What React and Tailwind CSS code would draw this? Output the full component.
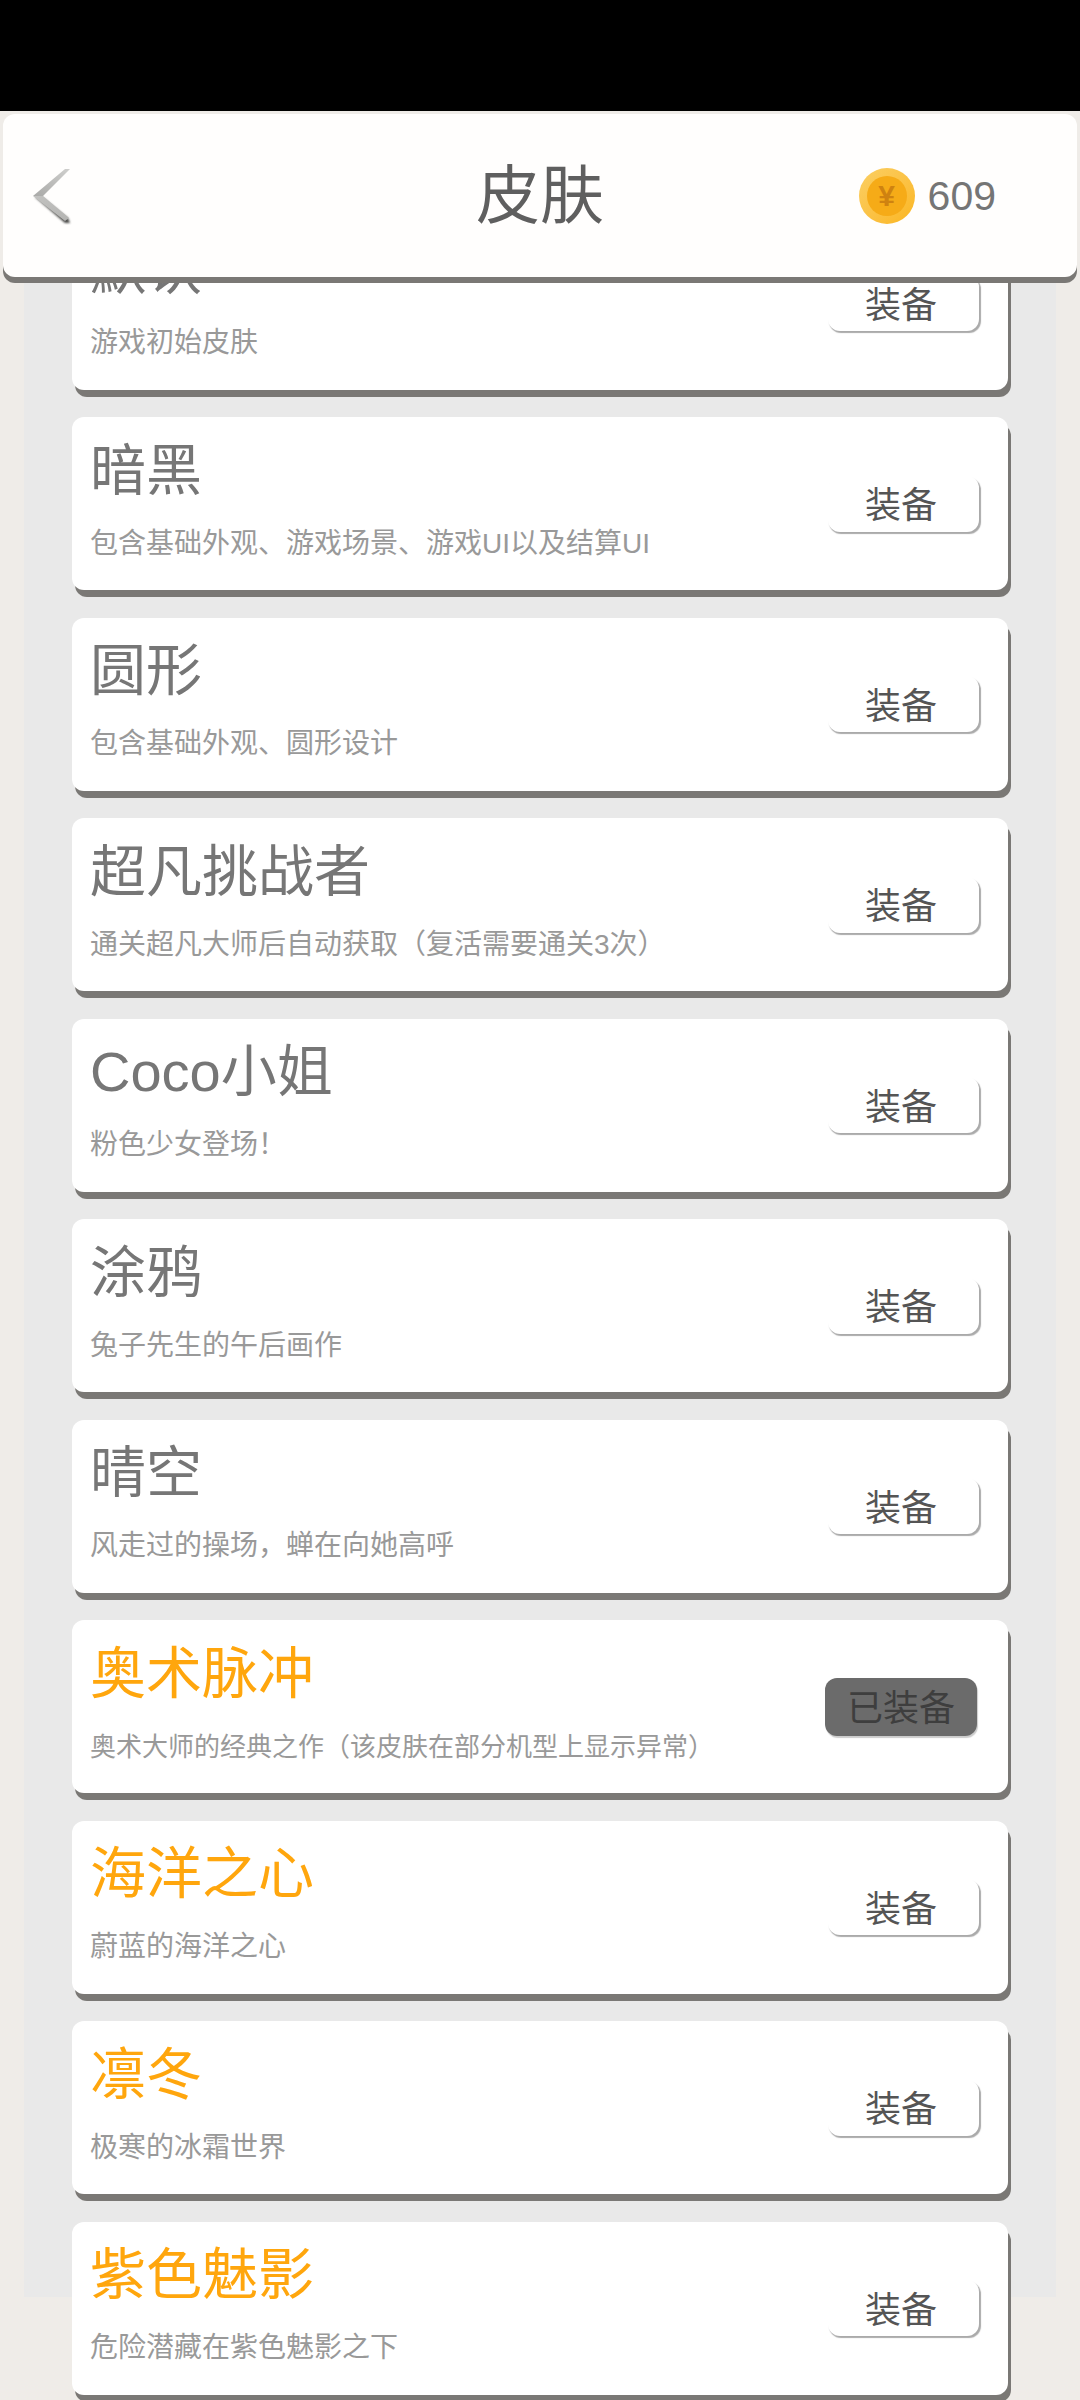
const font = { fontFamily: '"Liberation Sans", "Noto Sans CJK SC", sans-serif' };

const skins = [
  { name: "默认", desc: "游戏初始皮肤" },
  { name: "暗黑", desc: "包含基础外观、游戏场景、游戏UI以及结算UI" },
  { name: "圆形", desc: "包含基础外观、圆形设计" },
  { name: "超凡挑战者", desc: "通关超凡大师后自动获取（复活需要通关3次）" },
  { name: "Coco小姐", desc: "粉色少女登场！" },
  { name: "涂鸦", desc: "兔子先生的午后画作" },
  { name: "晴空", desc: "风走过的操场，蝉在向她高呼" },
  { name: "奥术脉冲", desc: "奥术大师的经典之作（该皮肤在部分机型上显示异常）", special: true, equipped: true, smallDesc: true },
  { name: "海洋之心", desc: "蔚蓝的海洋之心", special: true },
  { name: "凛冬", desc: "极寒的冰霜世界", special: true },
  { name: "紫色魅影", desc: "危险潜藏在紫色魅影之下", special: true },
];

function BackIcon() {
  return (
    <svg width="40" height="60" viewBox="0 0 40 60">
      <defs>
        <linearGradient id="armTop" x1="0" y1="1" x2="1" y2="0">
          <stop offset="0" stopColor="#a9a9a7" />
          <stop offset="1" stopColor="#cfcfcd" />
        </linearGradient>
        <linearGradient id="armBottom" x1="0" y1="0" x2="1" y2="1">
          <stop offset="0" stopColor="#c2c2c0" />
          <stop offset="1" stopColor="#b4b4b2" />
        </linearGradient>
        <filter id="soft" x="-20%" y="-20%" width="140%" height="140%">
          <feGaussianBlur stdDeviation="0.8" />
        </filter>
      </defs>
      <polygon points="2,31 32,57 37,57 35,52 9,31" fill="#4c4c48" filter="url(#soft)" />
      <polygon points="0,30 32,3 37,3 10,30" fill="url(#armTop)" />
      <polygon points="0,30 10,30 36,52 32,55" fill="url(#armBottom)" />
    </svg>
  );
}

function Coin() {
  return (
    <div className="flex h-14 w-14 items-center justify-center rounded-full bg-gradient-to-br from-[#fbcf62] to-[#fbb61a]">
      <div className="flex h-10 w-10 items-center justify-center rounded-full bg-[#f6ab17] text-[30px] font-bold leading-none text-[#cf8210]">
        ¥
      </div>
    </div>
  );
}

function SkinCard({ skin }) {
  return (
    <div className="flex h-[173px] shrink-0 items-center justify-between rounded-xl bg-white pl-[18px] pr-[29px] shadow-[3px_7px_0_#7a7875]">
      <div className="flex flex-col pb-[7px]">
        <div className={`text-[56px] leading-[56px] ${skin.special ? "text-[#ffa60d]" : "text-[#767676]"}`}>
          {skin.name}
        </div>
        <div className={`mt-[31px] leading-[28px] text-[#999999] ${skin.smallDesc ? "text-[26px]" : "text-[28px]"}`}>
          {skin.desc}
        </div>
      </div>
      {skin.equipped ? (
        <div className="mr-[2px] flex h-[58px] w-[152px] items-center justify-center rounded-xl bg-[#6b6b6b] pt-[4px] text-[36px] text-[#3e3e3e] shadow-[1px_2px_1px_#cccccc]">
          已装备
        </div>
      ) : (
        <div className="flex h-[56px] w-[151px] items-center justify-center rounded-xl bg-white pr-[5px] pt-[5px] text-[36px] text-[#555555] shadow-[1.5px_2px_1px_#aaaaaa]">
          装备
        </div>
      )}
    </div>
  );
}

export default function App() {
  return (
    <div className="flex h-[2400px] flex-col overflow-hidden bg-[#efece8]" style={font}>
      <div className="h-[111px] shrink-0 bg-black" />
      <div className="relative z-10 mx-[3px] mt-[3px] grid h-[163px] shrink-0 grid-cols-[1fr_auto_1fr] items-center rounded-xl bg-[#fffefd] shadow-[0_6px_0_#7a7875]">
        <div className="pl-[30px]">
          <BackIcon />
        </div>
        <div className="text-[64px] leading-none text-[#5f5f5f]">皮肤</div>
        <div className="flex items-center justify-end gap-[13px] pr-[81px]">
          <Coin />
          <span className="pt-[2px] text-[41px] leading-none text-[#757575]">609</span>
        </div>
      </div>
      <div className="relative mx-[24px] h-[2020px] shrink-0 bg-[#e9e9e9] px-[48px]">
        <div className="mt-[-60.5px] flex flex-col gap-[27.55px]">
          {skins.map((skin) => (
            <SkinCard key={skin.name} skin={skin} />
          ))}
        </div>
      </div>
    </div>
  );
}
